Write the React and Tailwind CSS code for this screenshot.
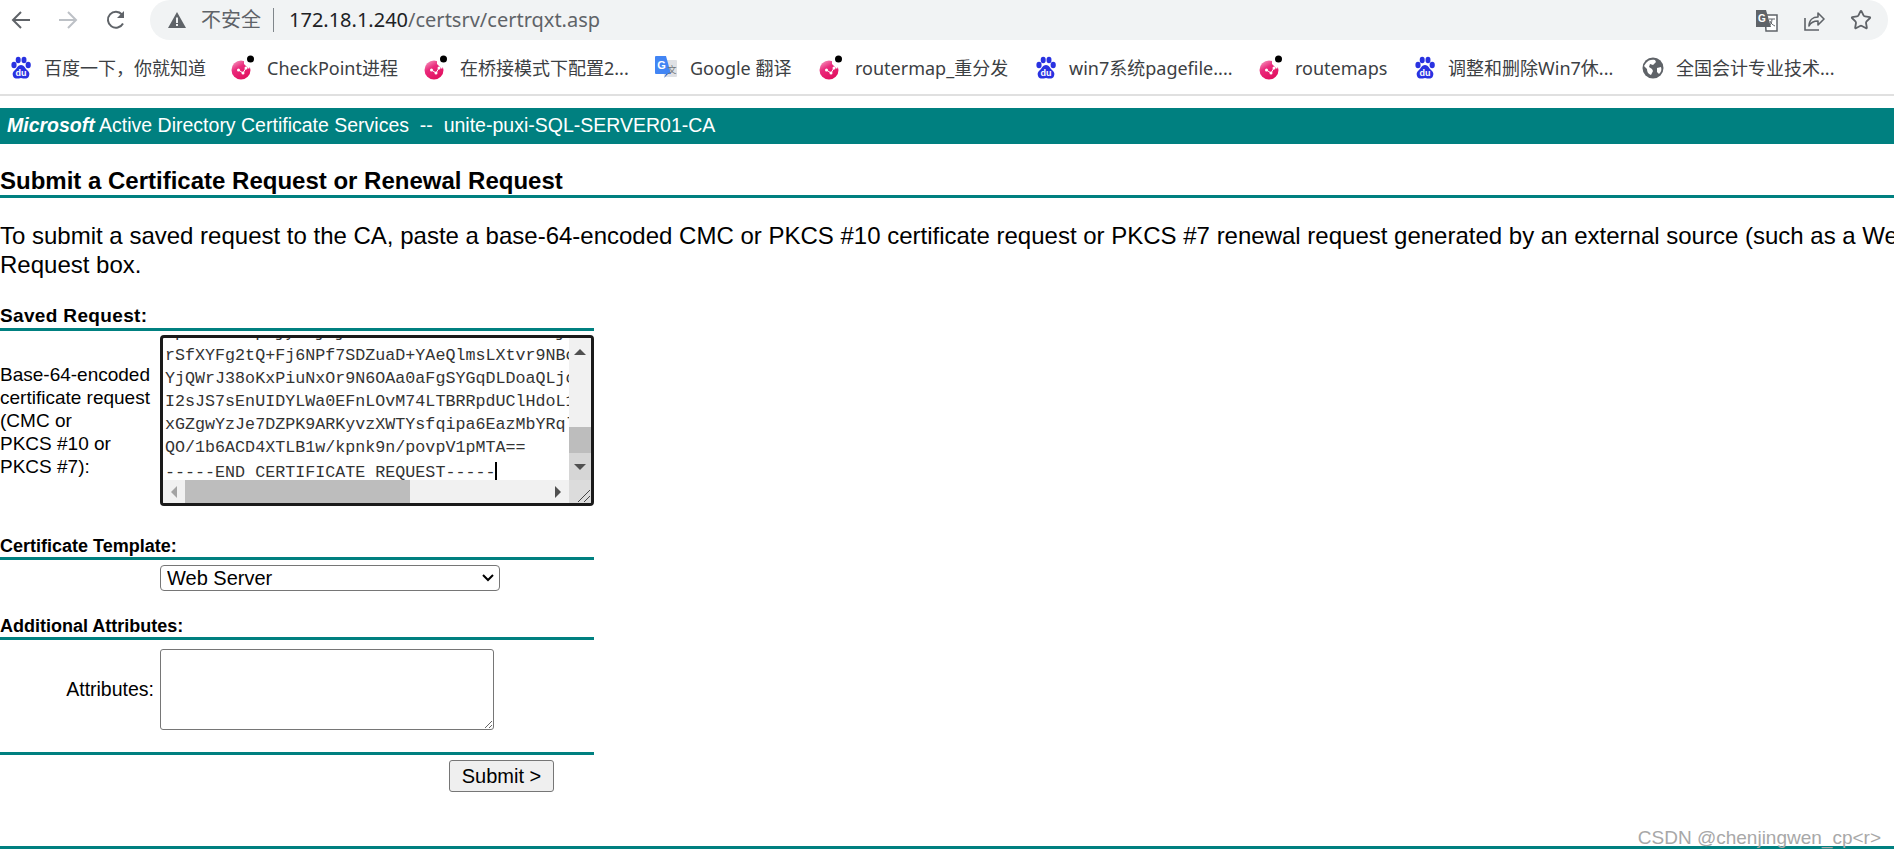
import { Star } from 'lucide-react';

const sans = "font-['Liberation_Sans',Arial,sans-serif]";

function BaiduIcon() {
  return (
    <svg width="22" height="24" viewBox="0 0 22 24" fill="#2932e1">
      <ellipse cx="4" cy="9" rx="2.6" ry="3.2" />
      <ellipse cx="8.2" cy="4" rx="2.5" ry="3.2" />
      <ellipse cx="14" cy="4" rx="2.5" ry="3.2" />
      <ellipse cx="18.2" cy="9" rx="2.6" ry="3.2" />
      <path d="M11 9c3 0 4 3 6 5s3 3 2 6-4 3-8 2c-4 1-7 1-8-2s0-4 2-6 3-5 6-5z" />
      <text x="11" y="20" textAnchor="middle" fontSize="9" fontWeight="700" fill="#fff" fontFamily="Liberation Sans, sans-serif">du</text>
    </svg>
  );
}

function PinkIcon() {
  return (
    <svg width="24" height="26" viewBox="0 0 24 26">
      <defs>
        <linearGradient id="pink" x1="0" y1="0" x2="0.6" y2="1">
          <stop offset="0" stopColor="#f7a8c8" />
          <stop offset="0.45" stopColor="#ea2a7c" />
          <stop offset="1" stopColor="#e2105f" />
        </linearGradient>
      </defs>
      <circle cx="10" cy="15" r="9.5" fill="url(#pink)" />
      <path d="M13 4l8 3-3 7-5-5z" fill="#fff" />
      <path d="M7.500 15l4.500 3 3-5" fill="none" stroke="#fff" strokeWidth="1" />
      <circle cx="7.500" cy="15" r="1.500" fill="#fff" />
      <circle cx="12" cy="18" r="1.500" fill="#fff" />
      <circle cx="15" cy="13" r="1.500" fill="#fff" />
      <circle cx="19.500" cy="4" r="3.500" fill="#000" />
    </svg>
  );
}

function TranslateIcon() {
  return (
    <svg width="24" height="26" viewBox="0 0 24 26">
      <path d="M9 5h13a1 1 0 0 1 1 1v15a1 1 0 0 1-1 1H10z" fill="#dfe1e5" />
      <path d="M2 1h10l5 18H2a1 1 0 0 1-1-1V2a1 1 0 0 1 1-1z" fill="#4285f4" />
      <path d="M12 19l-2 4 4-4z" fill="#3367c9" />
      <text x="7.500" y="14" textAnchor="middle" fontSize="11" fontWeight="700" fill="#fff" fontFamily="Liberation Sans, sans-serif">G</text>
      <text x="18" y="18" textAnchor="middle" fontSize="9" fill="#70757a" fontFamily="Noto Sans CJK SC, sans-serif">文</text>
    </svg>
  );
}

function GlobeIcon() {
  return (
    <svg width="22" height="22" viewBox="0 0 22 22">
      <circle cx="11" cy="11" r="10.500" fill="#5f6368" />
      <path d="M4 6c2-3 6-4 9-3l1 2-3 3-3-1-1 3 3 2 1 2-2 4c-3-1-4-3-4-6L2 9z" fill="#fff" />
      <path d="M15 11l4-1c1 3 0 5-2 7l-2-2z" fill="#fff" />
    </svg>
  );
}

const bookmarks = [
  { icon: BaiduIcon, label: '百度一下，你就知道', w: 'w-[165px]' },
  { icon: PinkIcon, label: 'CheckPoint进程', w: 'w-[135px]' },
  { icon: PinkIcon, label: '在桥接模式下配置2...', w: 'w-[172px]' },
  { icon: TranslateIcon, label: 'Google 翻译', w: 'w-[107px]' },
  { icon: PinkIcon, label: 'routermap_重分发', w: 'w-[158px]' },
  { icon: BaiduIcon, label: 'win7系统pagefile....', w: 'w-[168px]' },
  { icon: PinkIcon, label: 'routemaps', w: 'w-[97px]' },
  { icon: BaiduIcon, label: '调整和删除Win7休...', w: 'w-[172px]' },
  { icon: GlobeIcon, label: '全国会计专业技术...', w: 'w-[160px]' },
];

const requestLines = [
  'NpLHK03 0prjyIDjKjU+U/1D+0cC1uroKHUwKSLjN',
  'rSfXYFg2tQ+Fj6NPf7SDZuaD+YAeQlmsLXtvr9NBc',
  'YjQWrJ38oKxPiuNxOr9N6OAa0aFgSYGqDLDoaQLjc',
  'I2sJS7sEnUIDYLWa0EFnLOvM74LTBRRpdUClHdoL1',
  'xGZgwYzJe7DZPK9ARKyvzXWTYsfqipa6EazMbYRql',
  'QO/1b6ACD4XTLB1w/kpnk9n/povpV1pMTA==',
];

function Toolbar() {
  return (
    <div className="flex h-10 items-center bg-white">
      <div className="flex w-[150px] shrink-0 items-center gap-[27px] pl-[11px]">
        <svg width="20" height="20" viewBox="0 0 20 20" fill="none" stroke="#5f6368" strokeWidth="2">
          <path d="M19 10H2M10 2l-8 8 8 8" />
        </svg>
        <svg width="20" height="20" viewBox="0 0 20 20" fill="none" stroke="#bdc1c6" strokeWidth="2">
          <path d="M1 10h17M10 2l8 8-8 8" />
        </svg>
        <svg width="22" height="22" viewBox="0 0 22 22" fill="none" stroke="#5f6368" strokeWidth="2">
          <path d="M18 14.500A8 8 0 1 1 17 5.500" />
          <path d="M19 2v7h-7z" fill="#5f6368" stroke="none" />
        </svg>
      </div>
      <div className="flex h-10 flex-1 items-center rounded-l-[20px] rounded-r-[20px] bg-[#f1f3f4] mr-[6px] pl-[18px] pr-4 font-['Noto_Sans','Noto_Sans_CJK_SC',sans-serif]">
        <svg width="18" height="16" viewBox="0 0 18 16" fill="#5f6368">
          <path d="M9 0l9 16H0z" />
          <rect x="8" y="5.500" width="2" height="5.500" fill="#f1f3f4" />
          <rect x="8" y="12" width="2" height="2" fill="#f1f3f4" />
        </svg>
        <span className="ml-[15px] text-[20px] text-[#5f6368]">不安全</span>
        <span className="ml-[12px] h-[24px] w-px bg-[#80868b]" />
        <span className="ml-[15px] text-[20px] text-[#202124]">172.18.1.240<span className="text-[#5f6368]">/certsrv/certrqxt.asp</span></span>
        <div className="ml-auto flex items-center gap-[25px]">
          <svg width="23" height="23" viewBox="0 0 23 23">
            <path d="M10 6h12v16H11z" fill="#fff" stroke="#5f6368" strokeWidth="1.500" />
            <path d="M1 1h10l5 17H1z" fill="#5f6368" />
            <text x="7" y="13" textAnchor="middle" fontSize="10" fontWeight="700" fill="#fff" fontFamily="Liberation Sans, sans-serif">G</text>
            <path d="M14 10h6M17 10c0 4-2 6-3 7M15 12c1 3 3 4 5 5" fill="none" stroke="#5f6368" />
          </svg>
          <svg width="22" height="22" viewBox="0 0 22 22" fill="none" stroke="#5f6368" strokeWidth="1.600">
            <path d="M2 9v12h14" />
            <path d="M6 17c0-6 4-9 9-9V4l6 6-6 6v-4c-4 0-7 1-9 5z" strokeLinejoin="round" />
          </svg>
          <Star size={22} strokeWidth={2} className="text-[#5f6368]" />
        </div>
      </div>
    </div>
  );
}

function BookmarkBar() {
  return (
    <div className="flex h-[56px] items-center gap-[22px] border-b-2 border-[#e0e0e0] pl-[10px] pt-[2px] font-['Noto_Sans','Noto_Sans_CJK_SC',sans-serif] text-[18px] text-[#3c4043]">
      {bookmarks.map((b, i) => {
        const Icon = b.icon;
        return (
          <div key={i} className="flex items-center gap-3">
            <Icon />
            <span className={`${b.w} whitespace-nowrap`}>{b.label}</span>
          </div>
        );
      })}
    </div>
  );
}

function SectionHead({ children, className = 'text-[18px]' }) {
  return (
    <div className={`w-[594px] border-b-[3px] border-[#008080] leading-[22px] font-bold text-black ${className}`}>{children}</div>
  );
}

function RequestBox() {
  return (
    <div className="flex h-[171px] w-[434px] flex-col overflow-hidden rounded-[4px] border-[3px] border-[#1a1a1a] bg-white">
      <div className="flex min-h-0 flex-1">
        <div className="relative flex-1 overflow-hidden">
          <div className="-mt-[17px] pl-[2px] font-['Liberation_Mono',monospace] text-[16.7px] leading-[23px] whitespace-nowrap text-[#333]">
            {requestLines.map((l, i) => <div key={i}>{l}</div>)}
            <div>-----END CERTIFICATE REQUEST-----<span className="inline-block h-[18px] w-[2px] translate-y-[3px] bg-black" /></div>
          </div>
        </div>
        <div className="flex w-[22px] shrink-0 flex-col bg-[#f1f1f1]">
          <div className="flex h-[20px] items-center justify-center pt-2">
            <span className="h-0 w-0 border-x-[6px] border-b-[6px] border-x-transparent border-b-[#505050]" />
          </div>
          <div className="flex-1" />
          <div className="h-[26px] bg-[#bdbdbd]" />
          <div className="flex h-[27px] items-center justify-center bg-[#d6d6d6]">
            <span className="h-0 w-0 border-x-[6px] border-t-[6px] border-x-transparent border-t-[#505050]" />
          </div>
        </div>
      </div>
      <div className="flex h-[23px] shrink-0">
        <div className="flex flex-1 items-center bg-[#f1f1f1]">
          <span className="ml-[8px] h-0 w-0 border-y-[6px] border-r-[6px] border-y-transparent border-r-[#a3a3a3]" />
          <div className="ml-[8px] h-full w-[225px] bg-[#bdbdbd]" />
          <span className="ml-auto mr-[8px] h-0 w-0 border-y-[6px] border-l-[6px] border-y-transparent border-l-[#505050]" />
        </div>
        <div className="relative w-[22px] shrink-0 bg-[#dcdcdc]">
          <svg className="absolute right-0 bottom-0" width="16" height="16" viewBox="0 0 16 16" stroke="#444" fill="none">
            <path d="M3 15L15 3M9 15l6-6" />
          </svg>
        </div>
      </div>
    </div>
  );
}

export default function App() {
  return (
    <div className={`relative h-[859px] w-full overflow-hidden bg-white ${sans} text-black`}>
      <Toolbar />
      <BookmarkBar />

      <div className="mt-[12px] flex h-[36px] items-center bg-[#008080] pl-[7px] text-[19.500px] text-white whitespace-pre">
        <span className="font-bold italic">Microsoft</span> Active Directory Certificate Services  --  unite-puxi-SQL-SERVER01-CA
      </div>

      <div className="mt-[23px] border-b-[3px] border-[#008080] text-[24px] leading-[28px] font-bold">
        Submit a Certificate Request or Renewal Request
      </div>

      <p className="mt-[23px] text-[24px] leading-[29px] whitespace-nowrap">
        To submit a saved request to the CA, paste a base-64-encoded CMC or PKCS #10 certificate request or PKCS #7 renewal request generated by an external source (such as a Web server) in the Saved<br />
        Request box.
      </p>

      <div className="mt-[26px]"><SectionHead className="pb-[1px] text-[19px] tracking-[0.35px]">Saved Request:</SectionHead></div>
      <div className="mt-[4px] flex w-[594px]">
        <div className="w-[160px] shrink-0 self-center text-[19px] leading-[23px] whitespace-nowrap">
          Base-64-encoded<br />certificate request<br />(CMC or<br />PKCS #10 or<br />PKCS #7):
        </div>
        <RequestBox />
      </div>

      <div className="mt-[29px]"><SectionHead>Certificate Template:</SectionHead></div>
      <div className="mt-[5px] pl-[160px]">
        <div className="relative h-[26px] w-[340px]">
          <select defaultValue="Web Server" className="h-full w-full appearance-none rounded-[4px] border border-[#767676] bg-white px-[6px] text-[20px] leading-none text-black">
            <option>Web Server</option>
          </select>
          <svg className="pointer-events-none absolute right-[5px] top-[7px]" width="14" height="12" viewBox="0 0 14 12" fill="none" stroke="#000" strokeWidth="2">
            <path d="M2 3l5 5 5-5" />
          </svg>
        </div>
      </div>

      <div className="mt-[24px]"><SectionHead>Additional Attributes:</SectionHead></div>
      <div className="mt-[9px] flex w-[594px] items-center">
        <div className="w-[160px] shrink-0 pr-[6px] text-right text-[19.500px]">Attributes:</div>
        <textarea className="block h-[81px] w-[334px] rounded-[3px] border border-[#767676] bg-white" />
      </div>

      <div className="mt-[22px] w-[594px] border-t-[3px] border-[#008080]" />
      <div className="mt-[5px] flex w-[554px] justify-end">
        <button className="h-[32px] w-[105px] rounded-[3px] border border-[#767676] bg-[#efefef] text-[20px] text-black">Submit &gt;</button>
      </div>

      <div className="mt-[54px] border-t-[3px] border-[#008080]" />

      <div className="absolute right-[13px] bottom-[7px] text-[19px] text-[#a8a8a8]">CSDN @chenjingwen_cp&lt;r&gt;</div>
    </div>
  );
}
